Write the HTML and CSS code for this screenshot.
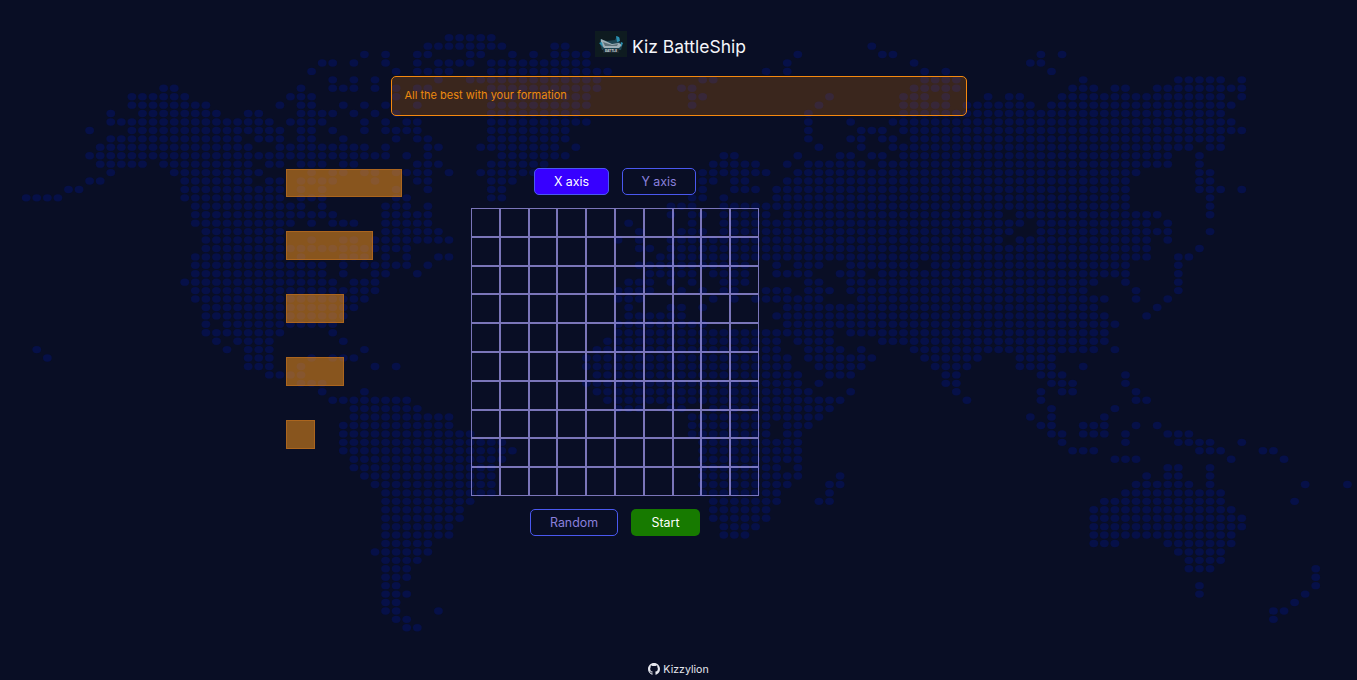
FILE: index.html
```html
<!DOCTYPE html>
<html lang="en">
<head>
    <meta charset="UTF-8">
    <meta name="viewport" content="width=device-width, initial-scale=1.0">
    <title>Kiz BattleShip</title>
    <link rel="stylesheet" href="styles.css">
</head>
<body>
    <svg class="world-map" id="worldMap" width="1357" height="680" aria-hidden="true"></svg>

    <header class="brand">
        <svg class="logo" viewBox="0 0 32 26" width="32" height="26" aria-hidden="true">
            <rect width="32" height="26" fill="#0e1b20"/>
            <path d="M5 8l7 2 8-1 2-4 3 2-1 4 4 1-2 7H7l-2-6z" fill="#1b4351"/>
            <path d="M6 8l11 5 7-1 3 2-3 3H9l-3-4z" fill="#9dafb7"/>
            <path d="M8 11l9 3 6-1-1 2H10z" fill="#5c7078"/>
            <path d="M21 5l3 1 1 4-3 1zM4 12l3-1 1 5zM26 11l2 1-2 4z" fill="#2a8fb0"/>
            <rect x="8" y="18" width="16" height="4" fill="#1c292e"/>
            <text x="16" y="21.2" class="logo-text" text-anchor="middle">BATTLE</text>
        </svg>
        <h1>Kiz BattleShip</h1>
    </header>

    <div class="message">All the best with your formation</div>

    <main class="game">
        <div class="ships">
            <div class="ship ship-4"></div>
            <div class="ship ship-3"></div>
            <div class="ship ship-2"></div>
            <div class="ship ship-2"></div>
            <div class="ship ship-1"></div>
        </div>
        <div class="board-wrap">
            <div class="btn-row">
                <button class="btn btn-active">X axis</button>
                <button class="btn btn-outline">Y axis</button>
            </div>
            <div class="board" id="board"></div>
            <div class="btn-row btn-row-bottom">
                <button class="btn btn-outline btn-random">Random</button>
                <button class="btn btn-start">Start</button>
            </div>
        </div>
    </main>

    <footer class="credit">
        <svg viewBox="0 0 16 16" width="12" height="12" aria-hidden="true">
            <path fill="currentColor" d="M8 0C3.58 0 0 3.58 0 8c0 3.54 2.29 6.53 5.47 7.59.4.07.55-.17.55-.38 0-.19-.01-.82-.01-1.49-2.01.37-2.53-.49-2.69-.94-.09-.23-.48-.94-.82-1.13-.28-.15-.68-.52-.01-.53.63-.01 1.08.58 1.23.82.72 1.21 1.87.87 2.33.66.07-.52.28-.87.51-1.07-1.78-.2-3.64-.89-3.64-3.95 0-.87.31-1.59.82-2.15-.08-.2-.36-1.02.08-2.12 0 0 .67-.21 2.2.82.64-.18 1.32-.27 2-.27.68 0 1.36.09 2 .27 1.53-1.04 2.2-.82 2.2-.82.44 1.1.16 1.92.08 2.12.51.56.82 1.27.82 2.15 0 3.07-1.87 3.75-3.65 3.95.29.25.54.73.54 1.48 0 1.07-.01 1.93-.01 2.2 0 .21.15.46.55.38A8.013 8.013 0 0016 8c0-4.42-3.58-8-8-8z"/>
        </svg>
        <span>Kizzylion</span>
    </footer>

    <script src="map.js"></script>
</body>
</html>
```

FILE: styles.css
```css
* { box-sizing: border-box; margin: 0; padding: 0; font-family: Inter, "Liberation Sans", sans-serif; }
html, body { height: 100%; }
body {
    position: relative; overflow: hidden; background: #090e25; color: #fff;
    display: flex; flex-direction: column; align-items: center;
}
.world-map { position: absolute; top: 0; left: 0; }
.world-map ellipse { fill: #061048; }

.brand, .message, .game, .credit { position: relative; }

.brand { display: flex; align-items: center; gap: 5px; margin-top: 31px; height: 26px; padding-right: 16px; }
.logo { display: block; }
.logo-text { font-size: 3.2px; font-weight: 700; fill: #d7dde0; }
.brand h1 { font-size: 17.5px; font-weight: 400; color: #f4f5fa; padding-top: 4px; }

.message {
    width: 576px; height: 40px; margin-top: 19px; padding: 0 13px 2px;
    display: flex; align-items: center;
    background: rgba(255, 136, 0, 0.2); border: 1px solid #f5890f; border-radius: 5px;
    color: #ec8a10; font-size: 11px;
}

.game { width: 785px; margin-top: 52px; display: flex; }

.ships { width: 185px; padding-top: 1px; display: flex; flex-direction: column; gap: 34px; }
.ship { height: 29px; background: rgba(250, 150, 25, 0.53); border: 1px solid rgba(180, 105, 30, 0.8); }
.ship-4 { width: 116px; height: 28px; }
.ship-3 { width: 87px; }
.ship-2 { width: 58px; }
.ship-1 { width: 29px; }

.board-wrap { width: 288px; display: flex; flex-direction: column; align-items: center; }
.btn-row { display: flex; gap: 13px; }
.btn-row-bottom { margin-top: 13px; }

.btn { width: 75px; height: 27px; border-radius: 5px; border: 1px solid transparent; background: none; color: #fff; font-size: 12.4px; }
.btn-active { background: #3700ff; border-color: #4a58f0; }
.btn-outline { border-color: #4a58f0; color: #8a80dc; width: 74px; }
.btn-random { width: 88px; }
.btn-start { background: #177a00; width: 69px; }

.board { width: 288px; height: 288px; margin-top: 13px; display: grid; grid-template-columns: repeat(10, 1fr); grid-template-rows: repeat(10, 1fr); }
.cell { border: 1px solid rgba(160, 152, 235, 0.75); }

.credit { margin-top: auto; height: 18px; padding-bottom: 4px; display: flex; align-items: center; gap: 3px; font-size: 10.6px; color: #e6e7ee; }
```

FILE: map.js
```js
// dotted world map behind the game, one string per row of columns
const mapRows = [
    "40-44",
    "38-45 50 51 80",
    "32 34 37 38 42 43 46 48 50-53 73 81 82 96 98",
    "28 29 31 34 37 39-42 44-53 72 84 95 96",
    "27 35 37-40 44-55 70 72 85 87 97",
    "29 31 33 39 42-54 64 65 85-88 100 109-113 115",
    "13 14 26 29-31 33 35 37 38 44-54 62 63 84-88 99-101 103 104 107-115",
    "10-15 25-27 35 44-53 63 64 76 83-85 87 91 93 94 98-113 115",
    "10-17 24 26 27 30 32 34 37 44-53 63 75 83-87 89-95 97-114",
    "8 11-18 21 22 26-29 31 33 35 44-52 74 83-113",
    "8-23 25-28 32 34 36 37 44-53 74 78 82-114",
    "6 10-24 26 27 29 32 34-37 44-51 74 79-81 83-115",
    "8-20 22-24 26 27 30 35 37 38 44-51 74 78 79 81 82 84-113",
    "7-21 24-32 34 38 39 43-50 52 75 79 82-110 112 113",
    "6-34 36 38 45-51 66 67 73 77 78 80 81 83-108 111",
    "7-11 13-21 23 24 26-28 30 31 37-39 44-49 65-69 72 74-79 81-108 111",
    "8 14-22 27 29 30 32 33 35-38 40 43-48 64-70 73-105 111 112",
    "6 7 15-21 23 24 26-29 33 37 38 44-46 64 65 67 68 72-104 111 112",
    "4 5 15-24 26 28 35 38 44 45 64 67-69 71-104 111-113 115",
    "0-3 15-24 26-28 35 36 44 45 63 64 66 71-104 112",
    "16-26 28 34-36 38 61-63 66-104 112",
    "16-29 34-38 61 63 64 66-70 72-92 94-107 112",
    "16-25 27 29-31 34-38 57 63 66-94 96-106 108",
    "17-24 34-39 58 62-64 66-93 96-108 112",
    "17-24 27 30 31 33-40 56 58 61-92 94-106 108",
    "17-36 58 59 61-106 111",
    "16-24 26 30-32 34 36 39 40 60-106 109 110",
    "16-28 30 32-36 38 58-68 71 73-75 78-84 86-104 109",
    "16-28 30 33 34 37 59-63 65-68 71-74 77-79 81-104 109",
    "15-29 31-33 57-59 61 63 66-68 74 75 78-101 104 109",
    "16-33 56-59 62 64 66 67 70-72 74-76 78-100 105 109",
    "16-32 56-58 65 67 69-75 79-102 105 108",
    "17-31 57 61 62 64 72-101 107",
    "17-30 57-62 71-102 106",
    "17 19-29 56-64 72-103",
    "17-24 29 56-76 78-102",
    "18 20-23 30 55-71 73-76 81-102",
    "1 19 21-23 32 54-71 74-77 79 84-101 103",
    "2 21-23 27 29-31 53-72 74-80 85-90 94-97",
    "21-23 26 33 35 53-72 75-79 86-89 94-97 100",
    "23-26 54-73 76-78 87 88 96-98 104",
    "26-28 53-73 75 87 88 97-99 104",
    "28 32 54-74 78 88 96 98 99 105",
    "29-36 55-77 89 96 105 106",
    "31-37 56-58 61 62 65-76 97 103",
    "31-40 63-75 95 97 102",
    "30-40 63-70 72-74 96 97 100-102 105 107",
    "30-42 63-70 72 73 97 98 100-102 104 108-110",
    "30-45 64-73 98 104 109-112 115",
    "30-46 64-73 99-101 111-113 117 118",
    "31-45 64-73 103-105 114 119",
    "31-44 64-71 73 108 109 112",
    "32-44 64-73 77 106 108 109 112",
    "33-44 64-72 76 77 105-110 112 121 125",
    "34-44 64-71 76 104-113",
    "34-42 65-71 75 76 102-113 120",
    "34-41 65-70 101-114",
    "34-41 65-70 101-115",
    "34-40 66-69 101-115",
    "34-40 66-68 101-114",
    "34-38 101-103 108-114",
    "33-38 109-113",
    "34-37 110-113",
    "34-36 110-112 122",
    "34-36 122",
    "34 35 111 122",
    "34-36 111 121",
    "34 35 120",
    "34 35 39 118 119",
    "35 36 118",
    "36 37"
];

const svgNS = "http://www.w3.org/2000/svg";
const worldMap = document.getElementById("worldMap");

mapRows.forEach((row, j) => {
    row.split(" ").forEach(part => {
        const [from, to] = part.split("-").map(Number);
        for (let i = from; i <= (to === undefined ? from : to); i++) {
            const dot = document.createElementNS(svgNS, "ellipse");
            dot.setAttribute("cx", (26.2 + i * 10.57).toFixed(2));
            dot.setAttribute("cy", (37.7 + j * 8.43).toFixed(2));
            dot.setAttribute("rx", 4.4);
            dot.setAttribute("ry", 3.7);
            worldMap.appendChild(dot);
        }
    });
});

const board = document.getElementById("board");
for (let n = 0; n < 100; n++) {
    const cell = document.createElement("div");
    cell.className = "cell";
    board.appendChild(cell);
}
```
